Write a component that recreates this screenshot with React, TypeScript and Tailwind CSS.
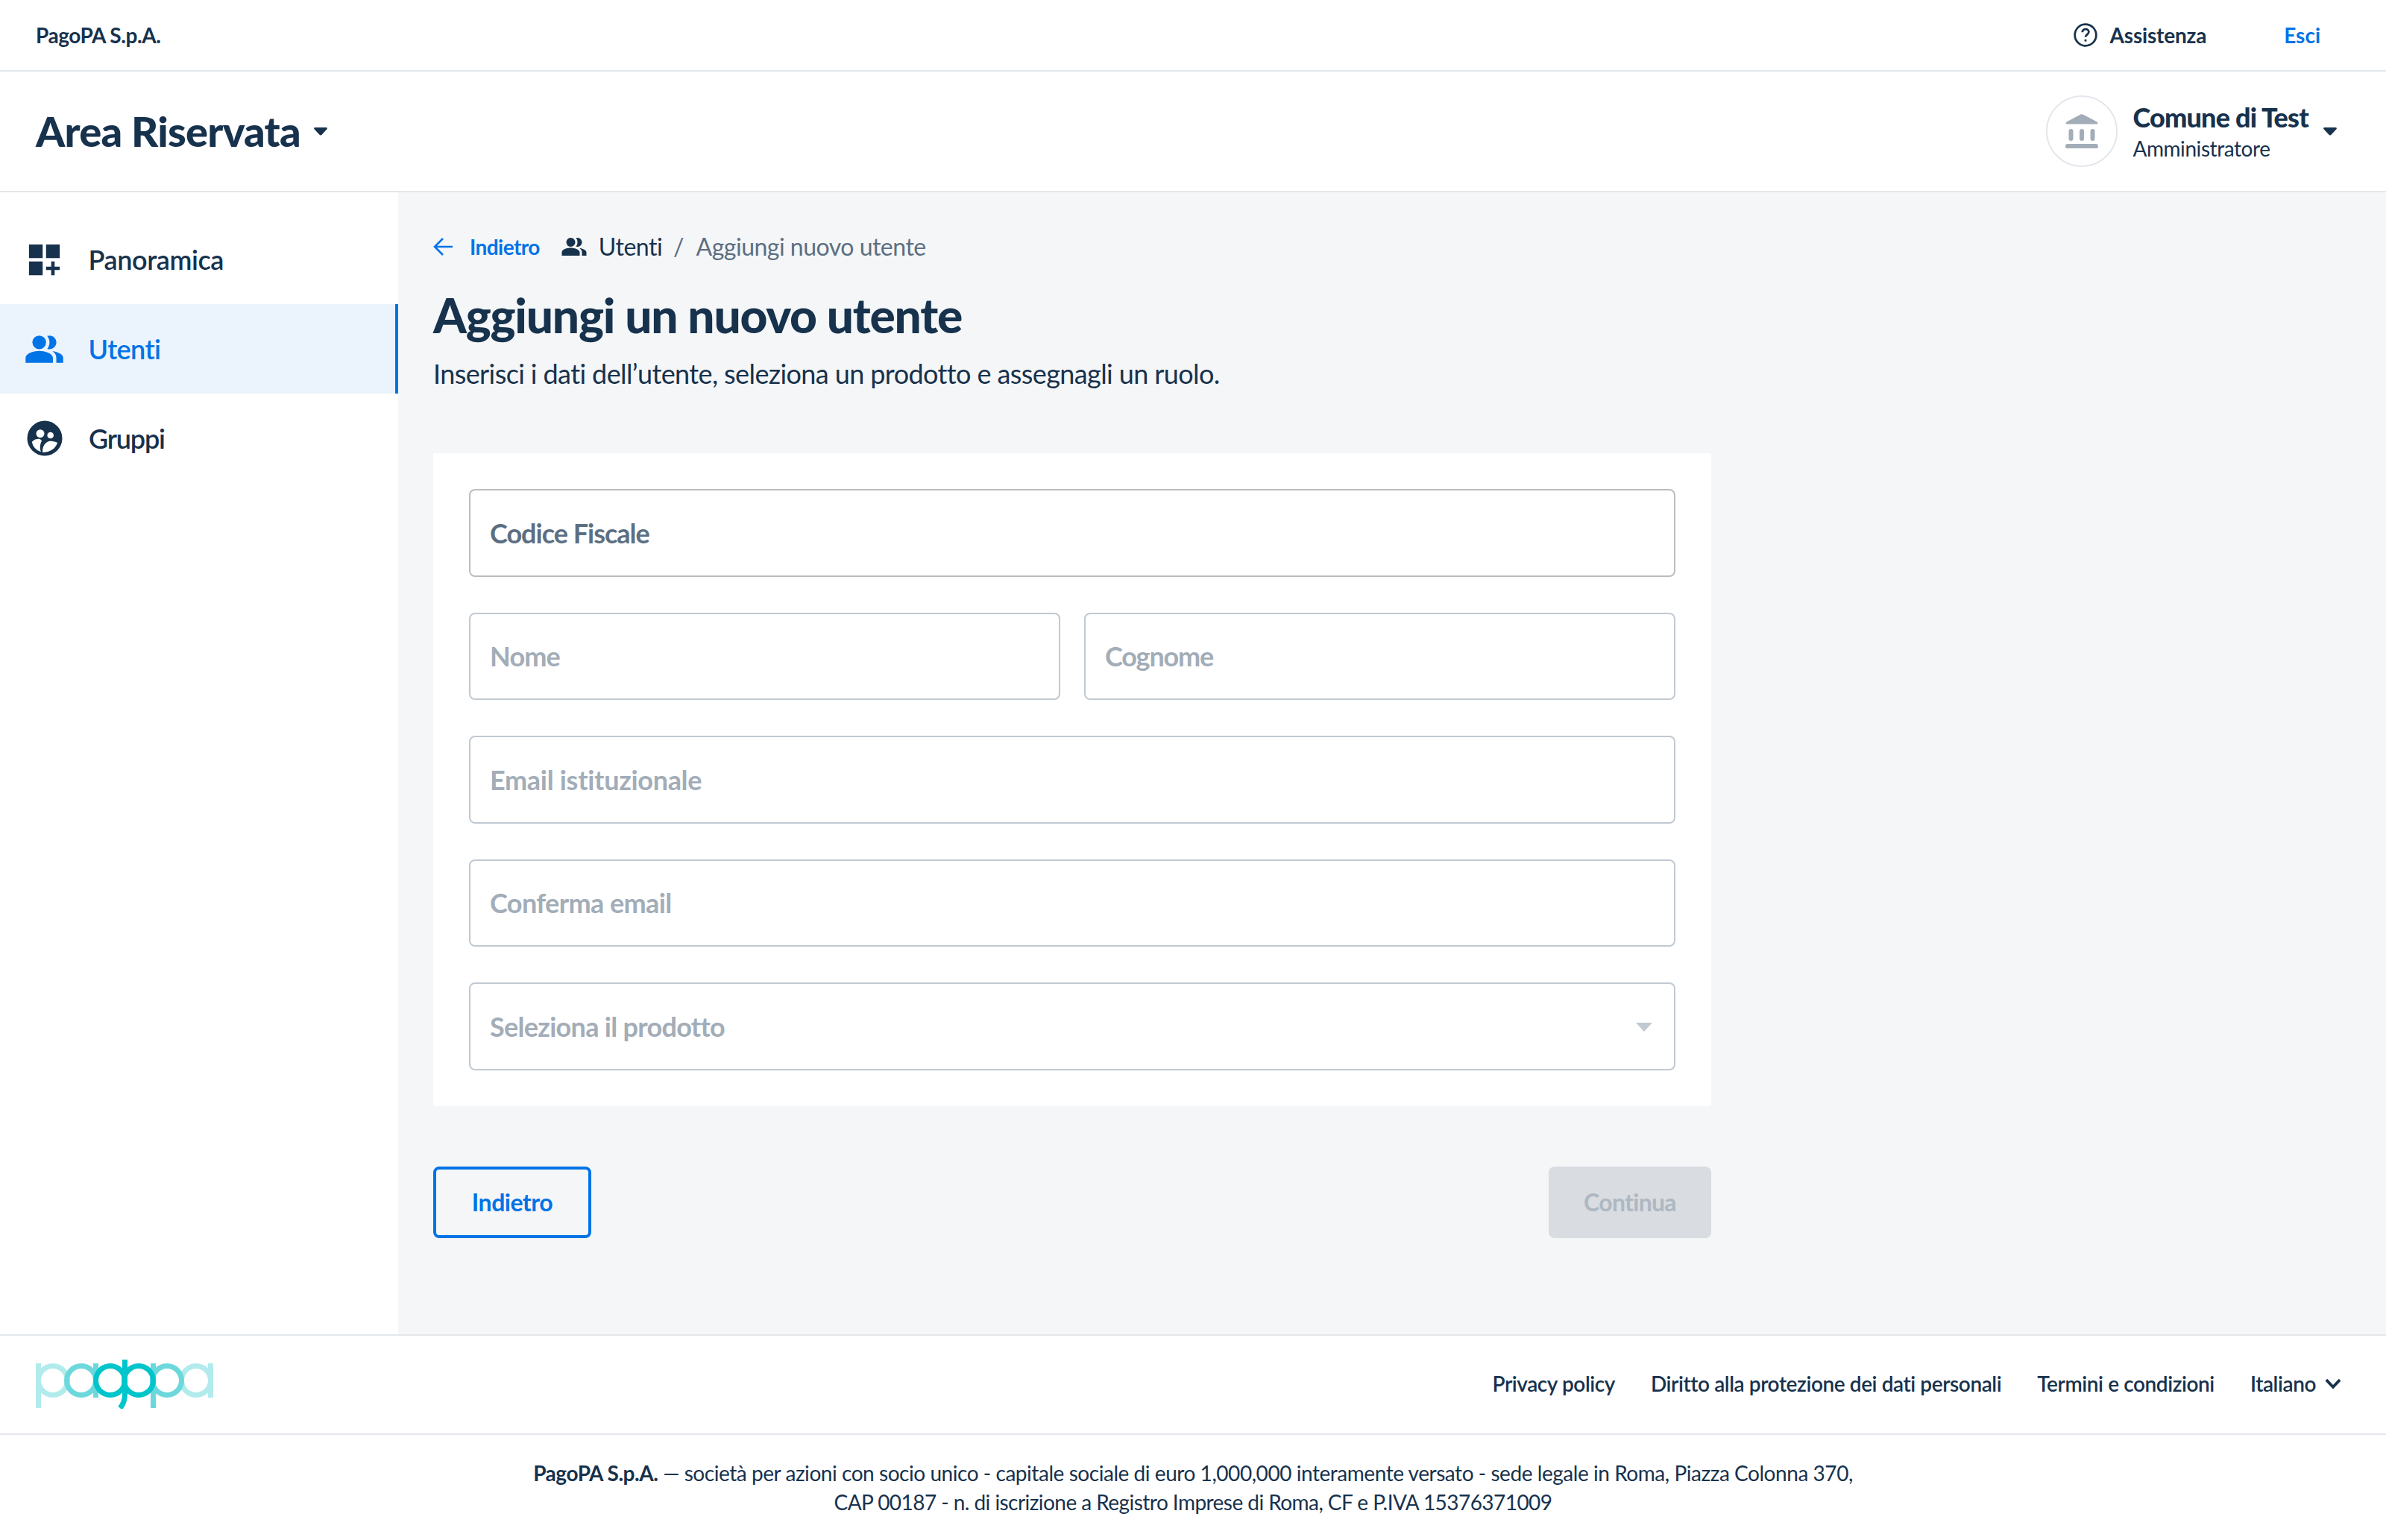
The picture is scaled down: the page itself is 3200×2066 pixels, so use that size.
const TEXT = "#17324D"

function IconDashboard() {
  return (
    <svg viewBox="0 0 24 24" className="-ml-[0.5px] h-[55px] w-[55px] fill-[#17324D]">
      <path d="M3 3h8v8H3zm10 0h8v8h-8zM3 13h8v8H3zm15 0h-2v3h-3v2h3v3h2v-3h3v-2h-3z" />
    </svg>
  )
}

function IconPeople({ className }: { className: string }) {
  return (
    <svg viewBox="0 0 24 24" className={className}>
      <path d="M16.67 13.13C18.04 14.06 19 15.32 19 17v3h4v-3c0-2.18-3.57-3.47-6.33-3.87z" />
      <circle cx="9" cy="8" r="4" />
      <path d="M15 12c2.21 0 4-1.79 4-4s-1.79-4-4-4c-.47 0-.91.1-1.33.24C14.5 5.27 15 6.58 15 8s-.5 2.73-1.33 3.76c.42.14.86.24 1.33.24zm-6 1c-2.67 0-8 1.34-8 4v3h16v-3c0-2.66-5.33-4-8-4z" />
    </svg>
  )
}

function IconGroups() {
  return (
    <svg viewBox="0 0 48 48" className="h-12 w-12">
      <circle cx="24" cy="24" r="23.5" fill={TEXT} />
      <circle cx="18" cy="17.7" r="5.5" fill="#fff" />
      <circle cx="31.7" cy="20" r="4.3" fill="#fff" />
      <path d="M6.7 29C9 26 13 24.5 16 24.7c2 .3 3.500 1.300 4 2.800-2 3.500-3 8.500-1.200 14.800A18.500 18.500 0 0 1 6.700 29z" fill="#fff" />
      <path d="M21 42.500c-.2-7.500 3-13 9.500-14.700 3.500-.5 7.500.5 10.500 2.200A18.500 18.500 0 0 1 21 42.500z" fill="#fff" />
    </svg>
  )
}

function Caret({ className }: { className: string }) {
  return (
    <svg viewBox="0 0 18 11" className={className}>
      <path d="M1.5 0h15c1.2 0 1.8 1.3 1 2.2l-7 7.6c-.8.9-2.2.9-3 0l-7-7.6C-.3 1.3.3 0 1.5 0z" />
    </svg>
  )
}

function PagoPaLogo() {
  return (
    <svg viewBox="0 0 238 66" className="-mt-[2px] h-[66px] w-[238px]" fill="none">
      <g stroke="#B2EBEC" strokeWidth="7">
        <circle cx="23" cy="28" r="19.5" />
        <circle cx="215" cy="28" r="19.5" />
      </g>
      <rect x="0" y="5" width="7" height="60" fill="#B2EBEC" />
      <rect x="231" y="5" width="7" height="46" fill="#B2EBEC" />
      <g stroke="#6CD8DC" strokeWidth="7">
        <circle cx="61" cy="28" r="19.5" />
        <circle cx="176" cy="28" r="19.5" />
      </g>
      <rect x="77" y="5" width="7" height="46" fill="#6CD8DC" />
      <rect x="154" y="5" width="7" height="60" fill="#6CD8DC" />
      <g stroke="#00C5CA" strokeWidth="7">
        <circle cx="100" cy="28" r="19.5" />
        <circle cx="138" cy="28" r="19.5" />
        <path d="M119.5 0v46c0 8-2 14-6.5 19" />
      </g>
    </svg>
  )
}

function Field({ label, dark, select, track }: { label: string; dark?: boolean; select?: boolean; track: string }) {
  return (
    <div className={`flex h-[117.5px] items-center justify-between rounded-lg border-2 bg-white px-[26px] ${dark ? "border-[#BDBDBD]" : "border-[#C1C9D2]"}`}>
      <span className={`text-[36px] font-bold ${track} ${dark ? "text-[#5C6F82]" : "text-[#A2ADB8]"}`}>{label}</span>
      {select && (
        <svg viewBox="0 0 22 12" className="mr-[3px] mt-[2px] h-3 w-[22px] fill-[#C1C9D2]">
          <path d="M0 0h22L11 12z" />
        </svg>
      )}
    </div>
  )
}

export default function App() {
  return (
    <div className="flex h-[2066px] flex-col bg-white font-['Lato','Noto_Sans',sans-serif] text-[#17324D]">
      <div className="flex h-24 shrink-0 items-center justify-between border-b-2 border-[#E3E7EB] pl-12 pr-[88px]">
        <span className="text-[28px] font-bold tracking-[-0.45px]">PagoPA S.p.A.</span>
        <div className="flex items-center">
          <svg viewBox="0 0 32 32" className="mr-[16px] h-[34px] w-[34px]" fill="none" stroke={TEXT} strokeWidth="2.6">
            <circle cx="16" cy="16" r="13.5" />
            <path d="M12 12.5c0-2.4 1.8-4 4.1-4 2.4 0 4 1.6 4 3.6 0 3.4-4.1 3.3-4.1 6.6" />
            <path d="M16 21.500v2.600" />
          </svg>
          <span className="text-[28px] font-bold tracking-[-0.2px]">Assistenza</span>
          <span className="ml-[104px] text-[28px] font-bold text-[#0073E6]">Esci</span>
        </div>
      </div>

      <div className="flex h-[162px] shrink-0 items-center justify-between border-b-2 border-[#E3E7EB] pl-12 pr-[66px]">
        <div className="flex items-center">
          <span className="text-[56px] font-black tracking-[-0.75px]">Area Riservata</span>
          <Caret className="ml-[18px] h-[11px] w-[18px] fill-[#17324D]" />
        </div>
        <div className="flex items-center">
          <div className="flex h-24 w-24 items-center justify-center rounded-full border-2 border-[#E3E7EB]">
            <svg viewBox="0 0 44 46" className="h-[46px] w-[44px] fill-[#A2ADB8]">
              <path d="M20.5.6c1-.5 2-.5 3 0l19 10c1.5.8 1 3-.5 3H2c-1.500 0-2-2.200-.5-3z" />
              <rect x="4.500" y="20" width="6" height="16" rx="3" />
              <rect x="19" y="20" width="6" height="16" rx="3" />
              <rect x="33.500" y="20" width="6" height="16" rx="3" />
              <rect x="0" y="40" width="44" height="6.500" rx="3.200" />
            </svg>
          </div>
          <div className="ml-5 flex flex-col">
            <span className="text-[36px] font-black leading-[44px] tracking-[-0.8px]">Comune di Test</span>
            <span className="mt-[2px] text-[28px] leading-[36px] tracking-[-0.43px]">Amministratore</span>
          </div>
          <Caret className="ml-5 h-[11px] w-[18px] fill-[#17324D]" />
        </div>
      </div>

      <div className="flex min-h-0 flex-1">
        <aside className="w-[534px] shrink-0 pt-[30px]">
          <div className="flex h-[120px] items-center pl-8">
            <IconDashboard />
            <span className="ml-[32px] text-[36px] font-semibold tracking-[-0.4px]">Panoramica</span>
          </div>
          <div className="flex h-[120px] items-center border-r-4 border-[#0073E6] bg-[#EBF4FD] pl-8 text-[#0073E6]">
            <IconPeople className="-ml-[0.5px] h-[55px] w-[55px] fill-[#0073E6]" />
            <span className="ml-[32px] text-[36px] font-semibold tracking-[-0.6px]">Utenti</span>
          </div>
          <div className="flex h-[120px] items-center pl-9">
            <IconGroups />
            <span className="ml-[35px] text-[36px] font-semibold tracking-[-1.2px]">Gruppi</span>
          </div>
        </aside>

        <main className="flex flex-1 flex-col bg-[#F5F6F7] pl-[47px]">
          <div className="w-[1714px]">
            <div className="mt-[55px] flex h-9 items-center">
              <svg viewBox="0 0 28 28" className="h-7 w-7" fill="none" stroke="#0073E6" strokeWidth="2.6">
                <path d="M26 14H2M13 3 2 14l11 11" />
              </svg>
              <span className="ml-[21px] text-[28px] font-bold tracking-[-0.55px] text-[#0073E6]">Indietro</span>
              <IconPeople className="ml-[28px] h-9 w-9 fill-[#17324D]" />
              <span className="ml-[15px] text-[32px] tracking-[-0.5px]">Utenti</span>
              <span className="ml-[15px] text-[32px] text-[#5C6F82]">/</span>
              <span className="ml-[16px] text-[32px] tracking-[-0.5px] text-[#5C6F82]">Aggiungi nuovo utente</span>
            </div>
            <h1 className="mt-[34px] text-[64px] font-black leading-[80px] tracking-[-1.2px]">Aggiungi un nuovo utente</h1>
            <p className="mt-[16px] text-[36px] leading-[44px] tracking-[-0.6px]">Inserisci i dati dell’utente, seleziona un prodotto e assegnagli un ruolo.</p>

            <div className="mt-[85px] flex flex-col gap-12 bg-white p-12">
              <Field label="Codice Fiscale" dark track="tracking-[-1px]" />
              <div className="grid grid-cols-2 gap-8">
                <Field label="Nome" track="tracking-[-0.8px]" />
                <Field label="Cognome" track="tracking-[-1.2px]" />
              </div>
              <Field label="Email istituzionale" track="tracking-[-0.3px]" />
              <Field label="Conferma email" track="tracking-[-0.6px]" />
              <Field label="Seleziona il prodotto" track="tracking-[-0.7px]" select />
            </div>

            <div className="mt-[81px] flex justify-between">
              <button className="flex h-24 w-[212px] items-center justify-center rounded-lg border-4 border-[#0073E6] text-[32px] font-bold tracking-[-0.5px] text-[#0073E6]">Indietro</button>
              <button className="flex h-24 w-[218px] items-center justify-center rounded-lg bg-[#D9DCE1] text-[32px] font-bold tracking-[-0.7px] text-[#AEB8C2]">Continua</button>
            </div>
          </div>
        </main>
      </div>

      <footer className="shrink-0 border-t-2 border-[#E3E7EB]">
        <div className="flex h-[133px] items-center justify-between border-b-2 border-[#E3E7EB] pl-12 pr-[60px]">
          <PagoPaLogo />
          <div className="-mt-[3px] flex items-center text-[28px] font-semibold tracking-[-0.42px]">
            <span>Privacy policy</span>
            <span className="ml-12">Diritto alla protezione dei dati personali</span>
            <span className="ml-12">Termini e condizioni</span>
            <span className="ml-12">Italiano</span>
            <svg viewBox="0 0 20 14" className="ml-[12px] h-[15px] w-[22px]" fill="none" stroke={TEXT} strokeWidth="3.5">
              <path d="M1.500 2 10 11l8.500-9" />
            </svg>
          </div>
        </div>
        <div className="flex flex-col items-center pb-[31px] pt-[32px] text-[28px] leading-[39px]">
          <span className="tracking-[-0.45px]"><b>PagoPA S.p.A.</b> — società per azioni con socio unico - capitale sociale di euro 1,000,000 interamente versato - sede legale in Roma, Piazza Colonna 370,</span>
          <span className="tracking-[-0.55px]">CAP 00187 - n. di iscrizione a Registro Imprese di Roma, CF e P.IVA 15376371009</span>
        </div>
      </footer>
    </div>
  )
}
